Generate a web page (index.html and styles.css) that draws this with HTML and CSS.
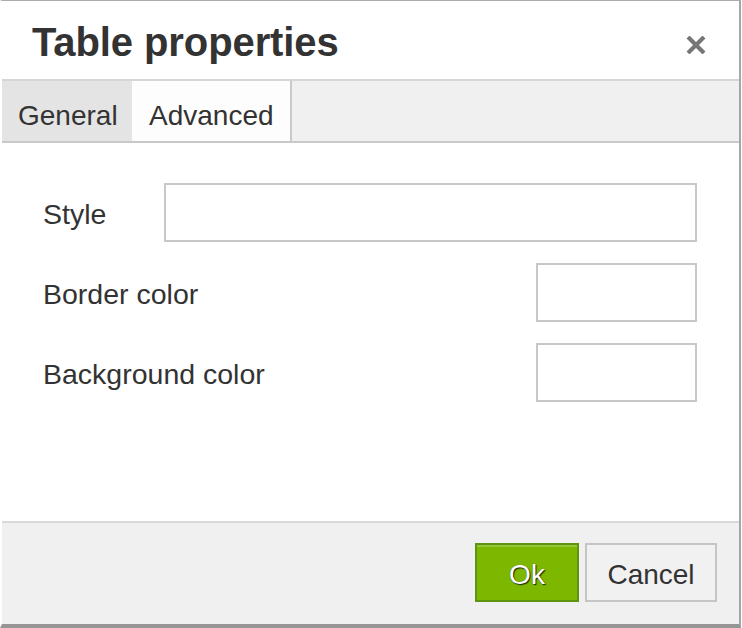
FILE: index.html
```html
<!DOCTYPE html>
<html>
<head>
<meta charset="utf-8">
<link rel="stylesheet" href="styles.css">
</head>
<body>
<div class="dialog">
  <div class="header">
    <div class="title">Table properties</div>
    <svg class="close" width="20" height="18" viewBox="0 0 20 18"><path d="M2 1 L18 17 M18 1 L2 17" stroke="#777" stroke-width="4.2" fill="none"/></svg>
  </div>
  <div class="tabs">
    <div class="tab tab-general">General</div>
    <div class="tab tab-active">Advanced</div>
  </div>
  <div class="body">
    <div class="row">
      <label class="label">Style</label>
      <div class="input input-wide"></div>
    </div>
    <div class="row">
      <label class="label">Border color</label>
      <div class="input input-color"></div>
    </div>
    <div class="row">
      <label class="label">Background color</label>
      <div class="input input-color"></div>
    </div>
  </div>
  <div class="footer">
    <div class="btn btn-ok">Ok</div>
    <div class="btn btn-cancel">Cancel</div>
  </div>
</div>
</body>
</html>
```

FILE: styles.css
```css
html, body {
  margin: 0;
  padding: 0;
  background: #fff;
}
body {
  font-family: "Liberation Sans", Arial, sans-serif;
  color: #333;
}
.dialog {
  box-sizing: border-box;
  width: 741px;
  height: 628px;
  border-top: 1px solid #ababab;
  border-left: 2px solid #fff;
  border-right: 2px solid #a6a6a6;
  border-bottom: 4px solid #959595;
  display: flex;
  flex-direction: column;
  background: #fff;
}
.header {
  box-sizing: border-box;
  height: 80px;
  flex: none;
  padding: 21px 33px 0 30px;
  border-bottom: 2px solid #d6d6d6;
  display: flex;
  justify-content: space-between;
  align-items: flex-start;
}
.title {
  font-size: 40px;
  font-weight: bold;
  line-height: 40px;
  color: #333;
  letter-spacing: -0.1px;
}
.close {
  margin-top: 14px;
  display: block;
}
.tabs {
  box-sizing: border-box;
  height: 62px;
  flex: none;
  background: #f0f0f0;
  border-bottom: 2px solid #c9c9c9;
  display: flex;
}
.tab {
  box-sizing: border-box;
  height: 60px;
  padding: 20px 0 0 16px;
  font-size: 28px;
  line-height: 30px;
  color: #333;
}
.tab-general {
  width: 130px;
  background: #e4e4e4;
}
.tab-active {
  width: 160px;
  background: #fdfdfd;
  border-right: 2px solid #c9c9c9;
  padding-left: 17px;
}
.body {
  flex: 1;
  padding: 40px 42px 0 41px;
  display: flex;
  flex-direction: column;
  gap: 21px;
}
.row {
  display: grid;
  grid-template-columns: 121px 1fr;
  align-items: center;
  height: 59px;
}
.label {
  font-size: 28.5px;
  line-height: 30px;
  padding-top: 2px;
  color: #333;
  white-space: nowrap;
}
.input {
  box-sizing: border-box;
  height: 59px;
  border: 2px solid #c8c8c8;
  background: #fff;
}
.input-wide {
  width: 100%;
}
.input-color {
  width: 161px;
  justify-self: end;
}
.footer {
  box-sizing: border-box;
  height: 103px;
  flex: none;
  background: #f0f0f0;
  border-top: 2px solid #d9d9d9;
  padding: 20px 22px 0 0;
  display: flex;
  justify-content: flex-end;
  align-items: flex-start;
  gap: 6px;
}
.btn {
  box-sizing: border-box;
  height: 59px;
  font-size: 28px;
  line-height: 55px;
  padding-top: 2px;
  text-align: center;
}
.btn-ok {
  width: 104px;
  background: #7db700;
  border: 2px solid #5e9412;
  box-shadow: inset 0 2px 0 rgba(255,255,255,0.22);
  color: #fff;
  text-shadow: 1px 1px 1px rgba(0,0,0,0.8), 0 0 1px rgba(0,0,0,0.4);
}
.btn-cancel {
  width: 132px;
  background: #f1f1f1;
  border: 2px solid #c5c5c5;
  color: #333;
}
```
